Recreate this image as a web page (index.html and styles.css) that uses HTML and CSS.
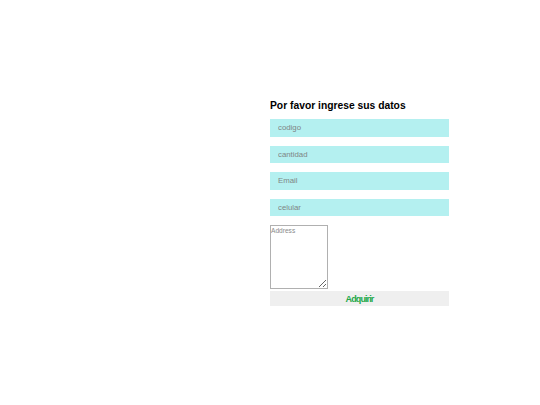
FILE: index.html
```html
<!DOCTYPE html>
<html lang="es">
<head>
<meta charset="utf-8">
<title>Datos</title>
<link rel="stylesheet" href="styles.css">
</head>
<body>
<div class="page">
  <div class="left"></div>
  <div class="right">
    <form class="form">
      <h2 class="title">Por favor ingrese sus datos</h2>
      <input class="field" type="text" placeholder="codigo">
      <input class="field" type="text" placeholder="cantidad">
      <input class="field" type="text" placeholder="Email">
      <input class="field" type="text" placeholder="celular">
      <textarea class="address" placeholder="Address"></textarea>
      <button class="buy" type="button">Adquirir</button>
    </form>
  </div>
</div>
</body>
</html>
```
FILE: styles.css
```css
html, body {
  margin: 0;
  padding: 0;
  background: #ffffff;
}
.page {
  display: grid;
  grid-template-columns: 270px 1fr;
  width: 540px;
  height: 405px;
}
.right {
  padding-top: 99px;
}
.form {
  display: flex;
  flex-direction: column;
  align-items: flex-start;
  width: 179px;
  margin: 0;
}
.title {
  margin: 0 0 7px 0;
  font-family: "Liberation Sans", Arial, sans-serif;
  font-weight: bold;
  font-size: 10.3px;
  line-height: 13px;
  color: #000;
  white-space: nowrap;
}
.field {
  box-sizing: border-box;
  width: 179px;
  height: 17.5px;
  margin: 0 0 9px 0;
  padding: 0 8px;
  border: none;
  background: #b4f0f0;
  font-family: "Liberation Sans", Arial, sans-serif;
  font-size: 7.8px;
  color: #333;
  outline: none;
}
.field::placeholder {
  color: #7f8585;
}
.address {
  box-sizing: border-box;
  width: 58px;
  height: 64px;
  margin: 0 0 2px 0;
  padding: 1px 0 0 0;
  border: 1px solid #b0b0b0;
  font-family: "Liberation Sans", Arial, sans-serif;
  font-size: 6.6px;
  resize: both;
}
.address::placeholder {
  color: #8a8a8a;
}
.buy {
  box-sizing: border-box;
  width: 179px;
  height: 15px;
  padding: 0;
  border: none;
  background: #efefef;
  font-family: "Liberation Sans", Arial, sans-serif;
  font-weight: bold;
  font-size: 9px;
  letter-spacing: -0.9px;
  color: #22a84a;
}
```
